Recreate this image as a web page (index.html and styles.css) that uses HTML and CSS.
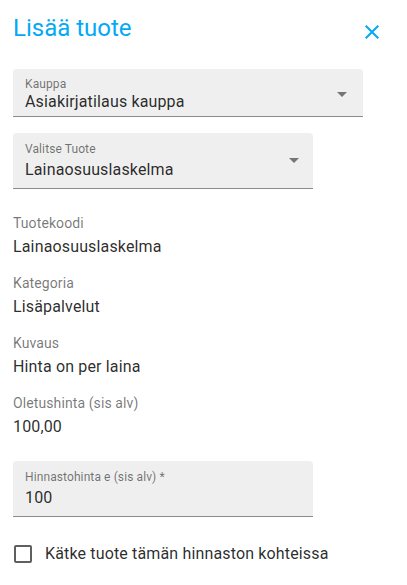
FILE: index.html
```html
<!DOCTYPE html>
<html lang="fi">
<head>
<meta charset="utf-8">
<title>Lisää tuote</title>
<link rel="stylesheet" href="styles.css">
</head>
<body>
<div class="dialog">
  <div class="header">
    <h1 class="title">Lisää tuote</h1>
    <button class="close" aria-label="Sulje">
      <svg viewBox="0 0 24 24" width="24" height="24"><path d="M19 6.41 17.59 5 12 10.59 6.41 5 5 6.41 10.59 12 5 17.59 6.41 19 12 13.41 17.59 19 19 17.59 13.41 12z" fill="currentColor"/></svg>
    </button>
  </div>

  <div class="field field-wide field-compact">
    <div class="field-body">
      <div class="field-label">Kauppa</div>
      <div class="field-value">Asiakirjatilaus kauppa</div>
    </div>
    <span class="arrow"></span>
  </div>

  <div class="field field-narrow">
    <div class="field-body">
      <div class="field-label">Valitse Tuote</div>
      <div class="field-value">Lainaosuuslaskelma</div>
    </div>
    <span class="arrow"></span>
  </div>

  <div class="info-list">
    <div class="info">
      <div class="info-label">Tuotekoodi</div>
      <div class="info-value">Lainaosuuslaskelma</div>
    </div>
    <div class="info">
      <div class="info-label">Kategoria</div>
      <div class="info-value">Lisäpalvelut</div>
    </div>
    <div class="info">
      <div class="info-label">Kuvaus</div>
      <div class="info-value">Hinta on per laina</div>
    </div>
    <div class="info">
      <div class="info-label">Oletushinta (sis alv)</div>
      <div class="info-value">100,00</div>
    </div>
  </div>

  <div class="field field-narrow field-price">
    <div class="field-body">
      <div class="field-label">Hinnastohinta e (sis alv) *</div>
      <div class="field-value">100</div>
    </div>
  </div>

  <label class="check">
    <span class="box"></span>
    <span class="check-text">Kätke tuote tämän hinnaston kohteissa</span>
  </label>
</div>
</body>
</html>
```
FILE: styles.css
```css
* { box-sizing: border-box; }
html, body { margin: 0; padding: 0; background: #fff; }
body {
  font-family: Roboto, "Noto Sans", "Liberation Sans", sans-serif;
  color: rgba(0, 0, 0, 0.84);
}
.dialog {
  display: flex;
  flex-direction: column;
  align-items: flex-start;
  padding: 12px 23px 0 13px;
}
.header {
  display: flex;
  align-items: center;
  justify-content: space-between;
  width: 100%;
}
.title {
  margin: 0;
  font-size: 24px;
  font-weight: 400;
  line-height: 32px;
  color: #03a9f4;
}
.close {
  border: 0;
  background: none;
  padding: 0;
  margin-top: 8px;
  width: 24px;
  height: 24px;
  color: #03a9f4;
  display: flex;
}
.field {
  display: flex;
  align-items: center;
  background: #efefef;
  border-radius: 4px 4px 0 0;
  border-bottom: 1px solid #8c8c8c;
  padding: 9px 14px 9px 12px;
}
.field-wide { width: 350px; margin-top: 25px; }
.field-narrow { width: 300px; margin-top: 16px; }
.field-compact { padding: 8px 16px 5px 12px; }
.field-compact .field-value { margin-top: 1px; }
.field-body { flex: 1; display: flex; flex-direction: column; }
.field-label {
  font-size: 12px;
  line-height: 14px;
  letter-spacing: 0.1px;
  color: rgba(0, 0, 0, 0.54);
}
.field-value {
  margin-top: 4px;
  font-size: 16px;
  line-height: 19px;
  letter-spacing: 0.15px;
}
.arrow {
  width: 0;
  height: 0;
  border-left: 5px solid transparent;
  border-right: 5px solid transparent;
  border-top: 5px solid #757575;
}
.info-list {
  display: flex;
  flex-direction: column;
  gap: 14px;
  margin-top: 24px;
}
.info-label {
  font-size: 14px;
  line-height: 20px;
  letter-spacing: 0.1px;
  color: rgba(0, 0, 0, 0.54);
}
.info-value {
  margin-top: 2px;
  font-size: 16px;
  line-height: 24px;
  letter-spacing: 0.15px;
}
.field-price { margin-top: 22px; }
.check {
  display: flex;
  align-items: center;
  gap: 13px;
  margin-top: 25px;
  padding-left: 1px;
  font-size: 16px;
  line-height: 24px;
  letter-spacing: 0.15px;
}
.box {
  width: 18px;
  height: 18px;
  border: 2px solid #5f5f5f;
  border-radius: 2px;
}
```
